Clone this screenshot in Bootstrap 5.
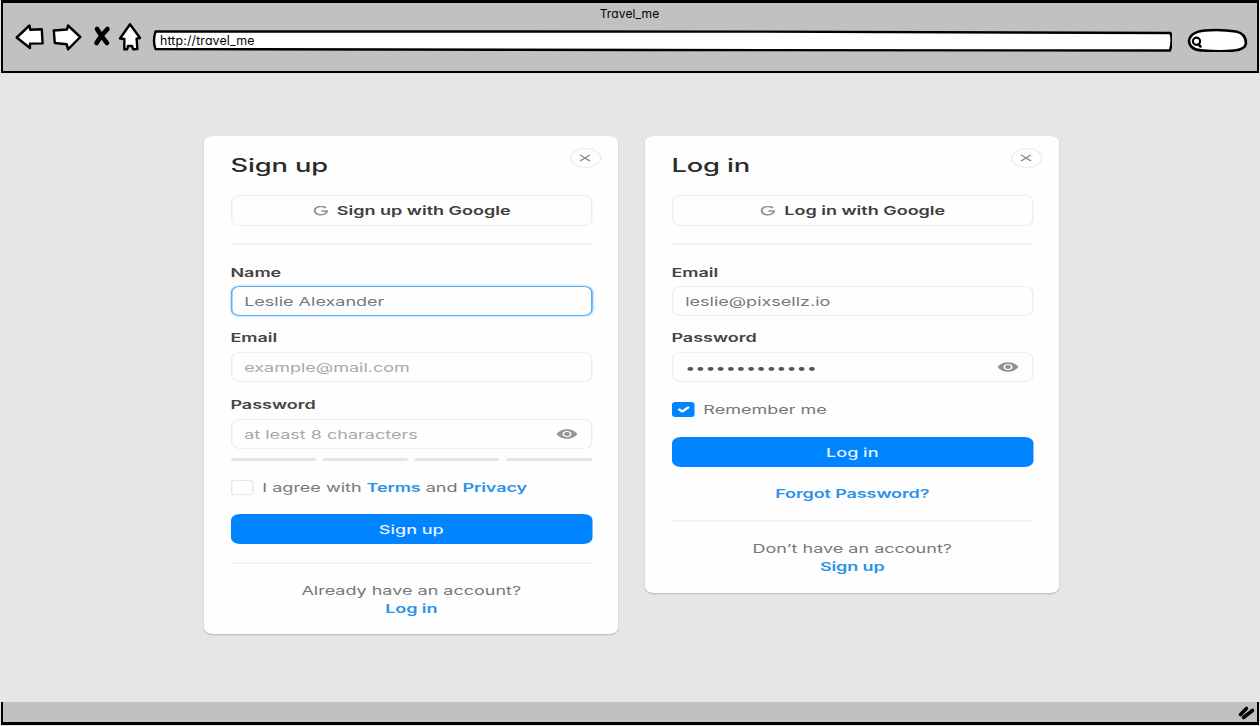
<!DOCTYPE html>
<html lang="en">
<head>
<meta charset="utf-8">
<meta name="viewport" content="width=device-width, initial-scale=1">
<title>Travel_me</title>
<link href="https://cdn.jsdelivr.net/npm/bootstrap@5.3.0/dist/css/bootstrap.min.css" rel="stylesheet">
<style>
  body { background: #e6e6e6; font-family: Inter, sans-serif; color: #3a3a3a; height: 726px; overflow: hidden; }
  svg { display: block; flex: none; }

  /* browser chrome */
  .chrome-top { height: 73px; background: #c1c1c1; border: 2.5px solid #000; border-top: 3px solid #000; border-bottom-width: 2px; margin: 0 1px; color: #000; }
  .chrome-text { font-size: 12px; line-height: 15px; font-feature-settings: "cv11"; }
  .chrome-title { padding: 3px 1px 0 0; letter-spacing: .13px; }
  .tools { padding: 0 9px 0 12px; }
  .ink { fill: #fff; stroke: #000; stroke-width: 2.4; stroke-linejoin: round; stroke-linecap: round; }
  .address { width: 1020px; height: 22px; margin: 9px 0 0 11px; }
  .address span { left: 8px; top: 3px; font-size: 12.4px; letter-spacing: .13px; }
  .chrome-bottom { height: 23px; background: #c1c1c1; border: 2.5px solid #000; border-top: 0; border-bottom-width: 3px; margin: 0 1px 1px; }

  /* forms: condensed 276px cards stretched to wide proportions */
  .stage { padding: 63px 0 0 203.5px; gap: 27px; }
  .slot { width: 414px; }
  .slot + .slot { padding-left: .5px; }
  .panel { width: 276.3px; transform: scaleX(1.5); transform-origin: 0 0; background: #fefefe; border-radius: 6px; box-shadow: 0 1px 1.5px rgba(0,0,0,.22); padding: 0 17.5px 0 17.6px; font-size: 12px; }
  .panel-signup { height: 498px; }
  .panel-login { height: 457px; }
  .head { height: 59px; }
  .head h1 { font-size: 18.2px; line-height: 24px; font-weight: 500; margin: 17px 0 0; color: #2b2b2b; letter-spacing: -.08px; }
  .close-dot { width: 21px; height: 20px; border: 1px solid #ececec; border-radius: 50%; margin: 12px -5.8px 0 0; background: none; padding: 0; }
  .btn-wire { height: 31px; border: 1px solid #eee; border-radius: 6px; font-size: 12px; font-weight: 600; color: #3d3d3d; gap: 6px; padding: 1px 0 0 1px; line-height: 28px; }
  .btn-wire svg { margin-right: -.4px; }
  .rule { height: 2px; background: #f4f4f4; }
  .tag { font-size: 12px; line-height: 17px; margin-bottom: -1px; font-weight: 600; color: #444; display: block; }
  .panel .form-control { height: 30px; border: 1px solid #eee; border-radius: 6px; font-size: 12px; padding: 0 8.2px; color: #777; background: #fefefe; line-height: 28px; }
  .panel .form-control::placeholder { color: #a8a8a8; opacity: 1; }
  .panel .form-control.active { border-color: #5aaef2; box-shadow: 0 0 2px rgba(0,132,255,.5); }
  .panel .dots { color: #555; }
  .eye { right: 10px; top: 10px; }
  .meter { gap: 4px; margin-top: 9px; }
  .meter div { height: 3px; border-radius: 2px; background: #e5e5e5; }
  .agree { gap: 6px; height: 16px; line-height: 16px; color: #777; }
  .agree .form-check-input { width: 15.3px; height: 15px; margin: -1px 0 0; border: 1px solid #e9e9e9; border-radius: 2.5px; flex: none; }
  .agree .form-check-input:checked { background-color: #0084ff; border-color: #0084ff; }
  .btn-blue { height: 30px; background: #0084ff; color: #e5f2ff; border: 0; border-radius: 6px; font-size: 12px; font-weight: 500; padding: 0; line-height: 31px; }
  .panel a { color: #2a92ea; font-weight: 600; text-decoration: none; letter-spacing: -.07px; }
  .foot { line-height: 18.3px; color: #777; }
</style>
</head>
<body class="d-flex flex-column">
<header class="chrome-top flex-shrink-0">
  <div class="chrome-text chrome-title text-center">Travel_me</div>
  <div class="tools d-flex align-items-start">
    <svg width="126" height="32" viewBox="15 21 126 32">
      <path class="ink" d="M16.700 37.500 29.500 25.500 30.300 29.700 41.800 29.200 42.600 43.400 30 43.600 30 48Z"/>
      <path class="ink" d="M53.800 30.500 67 29.500 68 25.500 80.300 37 68 49.300 66.700 44.300 54.800 43Z"/>
      <path d="M97 29 Q101 36 107 43M107.500 29 Q101 35 96.500 43" fill="none" stroke="#000" stroke-width="4.600" stroke-linecap="round"/>
      <path class="ink" d="M130 24.300 140 38 136.600 38.600 137.400 49 133.200 49.300 132 46 128 46 127.200 49.300 124.300 49.300 124.400 39 120 38.500Z"/>
    </svg>
    <div class="address position-relative">
      <svg width="1020" height="22" viewBox="0 0 1020 22"><path class="ink" d="M3.500 1.500Q.5 11 3.500 19L500 20 1018 20.500Q1021 11 1018.500 3L600 1.600Z"/></svg>
      <span class="chrome-text position-absolute">http://travel_me</span>
    </div>
    <svg class="ms-auto mt-1" width="62" height="27" viewBox="1186 25 62 27">
      <path class="ink" style="stroke-width:2.500" d="M1189 41Q1190 32 1205 30.500 1220 29 1236 31.500 1246 33.500 1246 43.500 1245 49.500 1234 50.500 1220 52 1204 50.500 1190 50.500 1189 41Z"/>
      <circle cx="1196.500" cy="41.300" r="3.600" fill="none" stroke="#000" stroke-width="2.200"/>
      <path d="M1198.500 44.500 1200.500 46.500" stroke="#000" stroke-width="2.500" stroke-linecap="round"/>
    </svg>
  </div>
</header>

<main class="stage d-flex align-items-start flex-grow-1">
  <div class="slot">
    <form class="panel panel-signup">
      <div class="head d-flex justify-content-between align-items-start">
        <h1>Sign up</h1>
        <button type="button" class="close-dot d-flex align-items-center justify-content-center" aria-label="Close"><svg width="8" height="8" viewBox="0 0 8 8"><path d="M.7.900 7.300 7M7.300.900.700 7" stroke="#8e8e8e" stroke-width="1.100"/></svg></button>
      </div>
      <button type="button" class="btn btn-wire w-100 d-flex align-items-center justify-content-center"><svg width="10" height="10" viewBox="0 0 10 10"><path d="M8.200 2A4.200 4.200 0 1 0 9.100 5.100H5.200" fill="none" stroke="#929292" stroke-width="1.500"/></svg>Sign up with Google</button>
      <div class="rule" style="margin-top:17px"></div>
      <label class="tag" style="margin-top:19px">Name</label>
      <input class="form-control active" style="margin-top:6px" value="Leslie Alexander">
      <label class="tag" style="margin-top:13px">Email</label>
      <input class="form-control" style="margin-top:7px" placeholder="example@mail.com">
      <label class="tag" style="margin-top:14px">Password</label>
      <div class="position-relative" style="margin-top:7px">
        <input class="form-control" placeholder="at least 8 characters">
        <svg class="eye position-absolute" width="14" height="10" viewBox="0 0 14 10"><path fill="#929292" fill-rule="evenodd" d="M0 5Q2.500.2 7 .2T14 5Q11.500 9.800 7 9.800T0 5ZM7 2A3 3 0 1 0 7 8 3 3 0 1 0 7 2Z"/><circle cx="7" cy="5" r="1.900" fill="#929292"/></svg>
      </div>
      <div class="meter d-flex"><div class="flex-fill"></div><div class="flex-fill"></div><div class="flex-fill"></div><div class="flex-fill"></div></div>
      <div class="agree d-flex align-items-center" style="margin-top:18.500px"><input class="form-check-input" type="checkbox"><span>I agree with <a href="#">Terms</a> and <a href="#">Privacy</a></span></div>
      <button type="button" class="btn btn-blue w-100" style="margin-top:18.500px">Sign up</button>
      <div class="rule" style="margin-top:17.500px"></div>
      <div class="foot text-center" style="margin-top:18.500px">Already have an account?<br><a href="#">Log in</a></div>
    </form>
  </div>
  <div class="slot">
    <form class="panel panel-login">
      <div class="head d-flex justify-content-between align-items-start">
        <h1>Log in</h1>
        <button type="button" class="close-dot d-flex align-items-center justify-content-center" aria-label="Close"><svg width="8" height="8" viewBox="0 0 8 8"><path d="M.7.900 7.300 7M7.300.900.700 7" stroke="#8e8e8e" stroke-width="1.100"/></svg></button>
      </div>
      <button type="button" class="btn btn-wire w-100 d-flex align-items-center justify-content-center"><svg width="10" height="10" viewBox="0 0 10 10"><path d="M8.200 2A4.200 4.200 0 1 0 9.100 5.100H5.200" fill="none" stroke="#929292" stroke-width="1.500"/></svg>Log in with Google</button>
      <div class="rule" style="margin-top:17px"></div>
      <label class="tag" style="margin-top:19px">Email</label>
      <input class="form-control" style="margin-top:6px" value="leslie@pixsellz.io">
      <label class="tag" style="margin-top:13px">Password</label>
      <div class="position-relative" style="margin-top:7px">
        <input class="form-control dots" type="password" value="travelme12345">
        <svg class="eye position-absolute" width="14" height="10" viewBox="0 0 14 10"><path fill="#929292" fill-rule="evenodd" d="M0 5Q2.500.2 7 .2T14 5Q11.500 9.800 7 9.800T0 5ZM7 2A3 3 0 1 0 7 8 3 3 0 1 0 7 2Z"/><circle cx="7" cy="5" r="1.900" fill="#929292"/></svg>
      </div>
      <div class="agree d-flex align-items-center" style="margin-top:20px"><input class="form-check-input" type="checkbox" checked><span>Remember me</span></div>
      <button type="button" class="btn btn-blue w-100" style="margin-top:19px">Log in</button>
      <div class="foot text-center" style="margin-top:17.500px"><a href="#">Forgot Password?</a></div>
      <div class="rule" style="margin-top:17.500px"></div>
      <div class="foot text-center" style="margin-top:17.500px">Don’t have an account?<br><a href="#">Sign up</a></div>
    </form>
  </div>
</main>

<footer class="chrome-bottom flex-shrink-0 d-flex justify-content-end">
  <svg width="21" height="20" viewBox="1236 702 21 20"><path d="M1240.500 714.500 1246.500 708.500M1243.500 717.500 1252.500 710.500" stroke="#000" stroke-width="3.600" stroke-linecap="round"/></svg>
</footer>
<script src="https://cdn.jsdelivr.net/npm/bootstrap@5.3.0/dist/js/bootstrap.bundle.min.js"></script>
</body>
</html>
